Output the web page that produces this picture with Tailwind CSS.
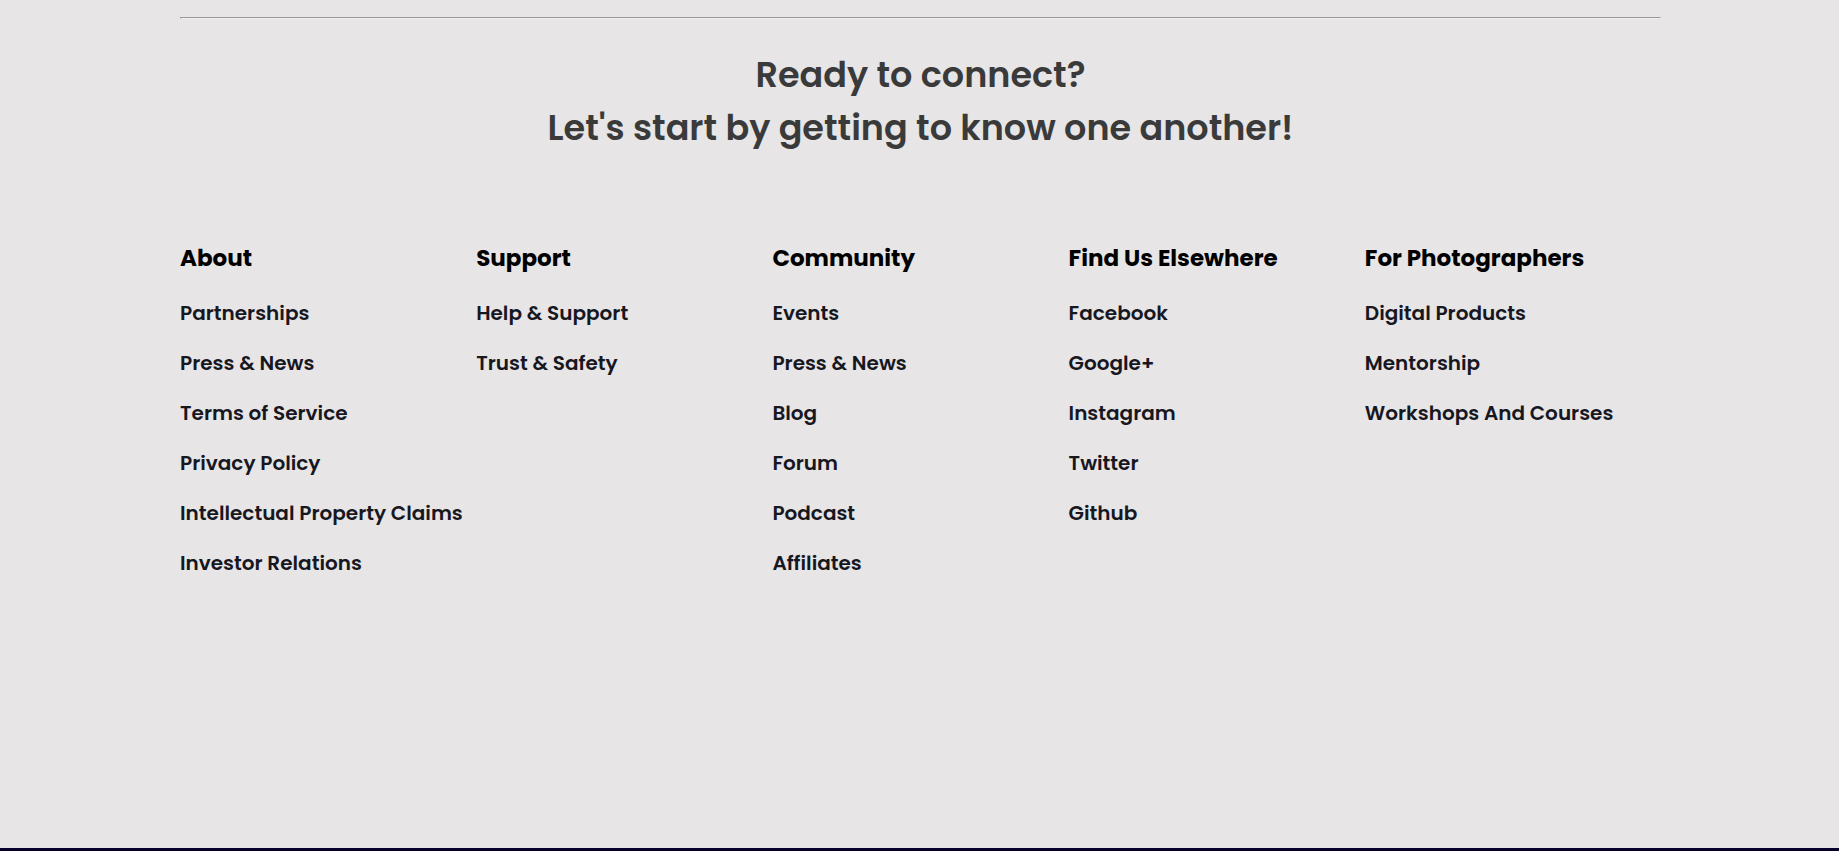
<!DOCTYPE html>
<html lang="en">
<head>
<meta charset="utf-8">
<meta name="viewport" content="width=device-width, initial-scale=1">
<title>Ready to connect?</title>
<script src="https://cdn.jsdelivr.net/npm/@tailwindcss/browser@4"></script>
</head>
<body class="flex min-h-screen flex-col bg-[#e7e5e6] font-['Poppins','Inter',sans-serif]">
<footer class="w-full flex-1 pt-[17px] pr-[178px] pl-[180px]">
  <hr class="border border-t-[#9a9a9a] border-r-[#eeeeee] border-b-[#eeeeee] border-l-[#9a9a9a]">
  <h2 class="pt-[29px] text-center text-[35px] leading-[53px] font-semibold text-[#3a3a3a]">Ready to connect?<br>Let's start by getting to know one another!</h2>
  <nav class="grid grid-cols-5 pt-[86px] text-[20px] leading-[30px] font-semibold whitespace-nowrap text-[#17171f]" aria-label="Footer">
    <section>
      <h3 class="mb-[22px] text-[23px] leading-9 font-bold text-black">About</h3>
      <ul class="flex flex-col gap-5">
        <li><a href="#">Partnerships</a></li>
        <li><a href="#">Press &amp; News</a></li>
        <li><a href="#">Terms of Service</a></li>
        <li><a href="#">Privacy Policy</a></li>
        <li><a href="#">Intellectual Property Claims</a></li>
        <li><a href="#">Investor Relations</a></li>
      </ul>
    </section>
    <section>
      <h3 class="mb-[22px] text-[23px] leading-9 font-bold text-black">Support</h3>
      <ul class="flex flex-col gap-5">
        <li><a href="#">Help &amp; Support</a></li>
        <li><a href="#">Trust &amp; Safety</a></li>
      </ul>
    </section>
    <section>
      <h3 class="mb-[22px] text-[23px] leading-9 font-bold text-black">Community</h3>
      <ul class="flex flex-col gap-5">
        <li><a href="#">Events</a></li>
        <li><a href="#">Press &amp; News</a></li>
        <li><a href="#">Blog</a></li>
        <li><a href="#">Forum</a></li>
        <li><a href="#">Podcast</a></li>
        <li><a href="#">Affiliates</a></li>
      </ul>
    </section>
    <section>
      <h3 class="mb-[22px] text-[23px] leading-9 font-bold text-black">Find Us Elsewhere</h3>
      <ul class="flex flex-col gap-5">
        <li><a href="#">Facebook</a></li>
        <li><a href="#">Google+</a></li>
        <li><a href="#">Instagram</a></li>
        <li><a href="#">Twitter</a></li>
        <li><a href="#">Github</a></li>
      </ul>
    </section>
    <section>
      <h3 class="mb-[22px] text-[23px] leading-9 font-bold text-black">For Photographers</h3>
      <ul class="flex flex-col gap-5">
        <li><a href="#">Digital Products</a></li>
        <li><a href="#">Mentorship</a></li>
        <li><a href="#">Workshops And Courses</a></li>
      </ul>
    </section>
  </nav>
</footer>
<div class="h-[3px] bg-[#06002b]"></div>
</body>
</html>
